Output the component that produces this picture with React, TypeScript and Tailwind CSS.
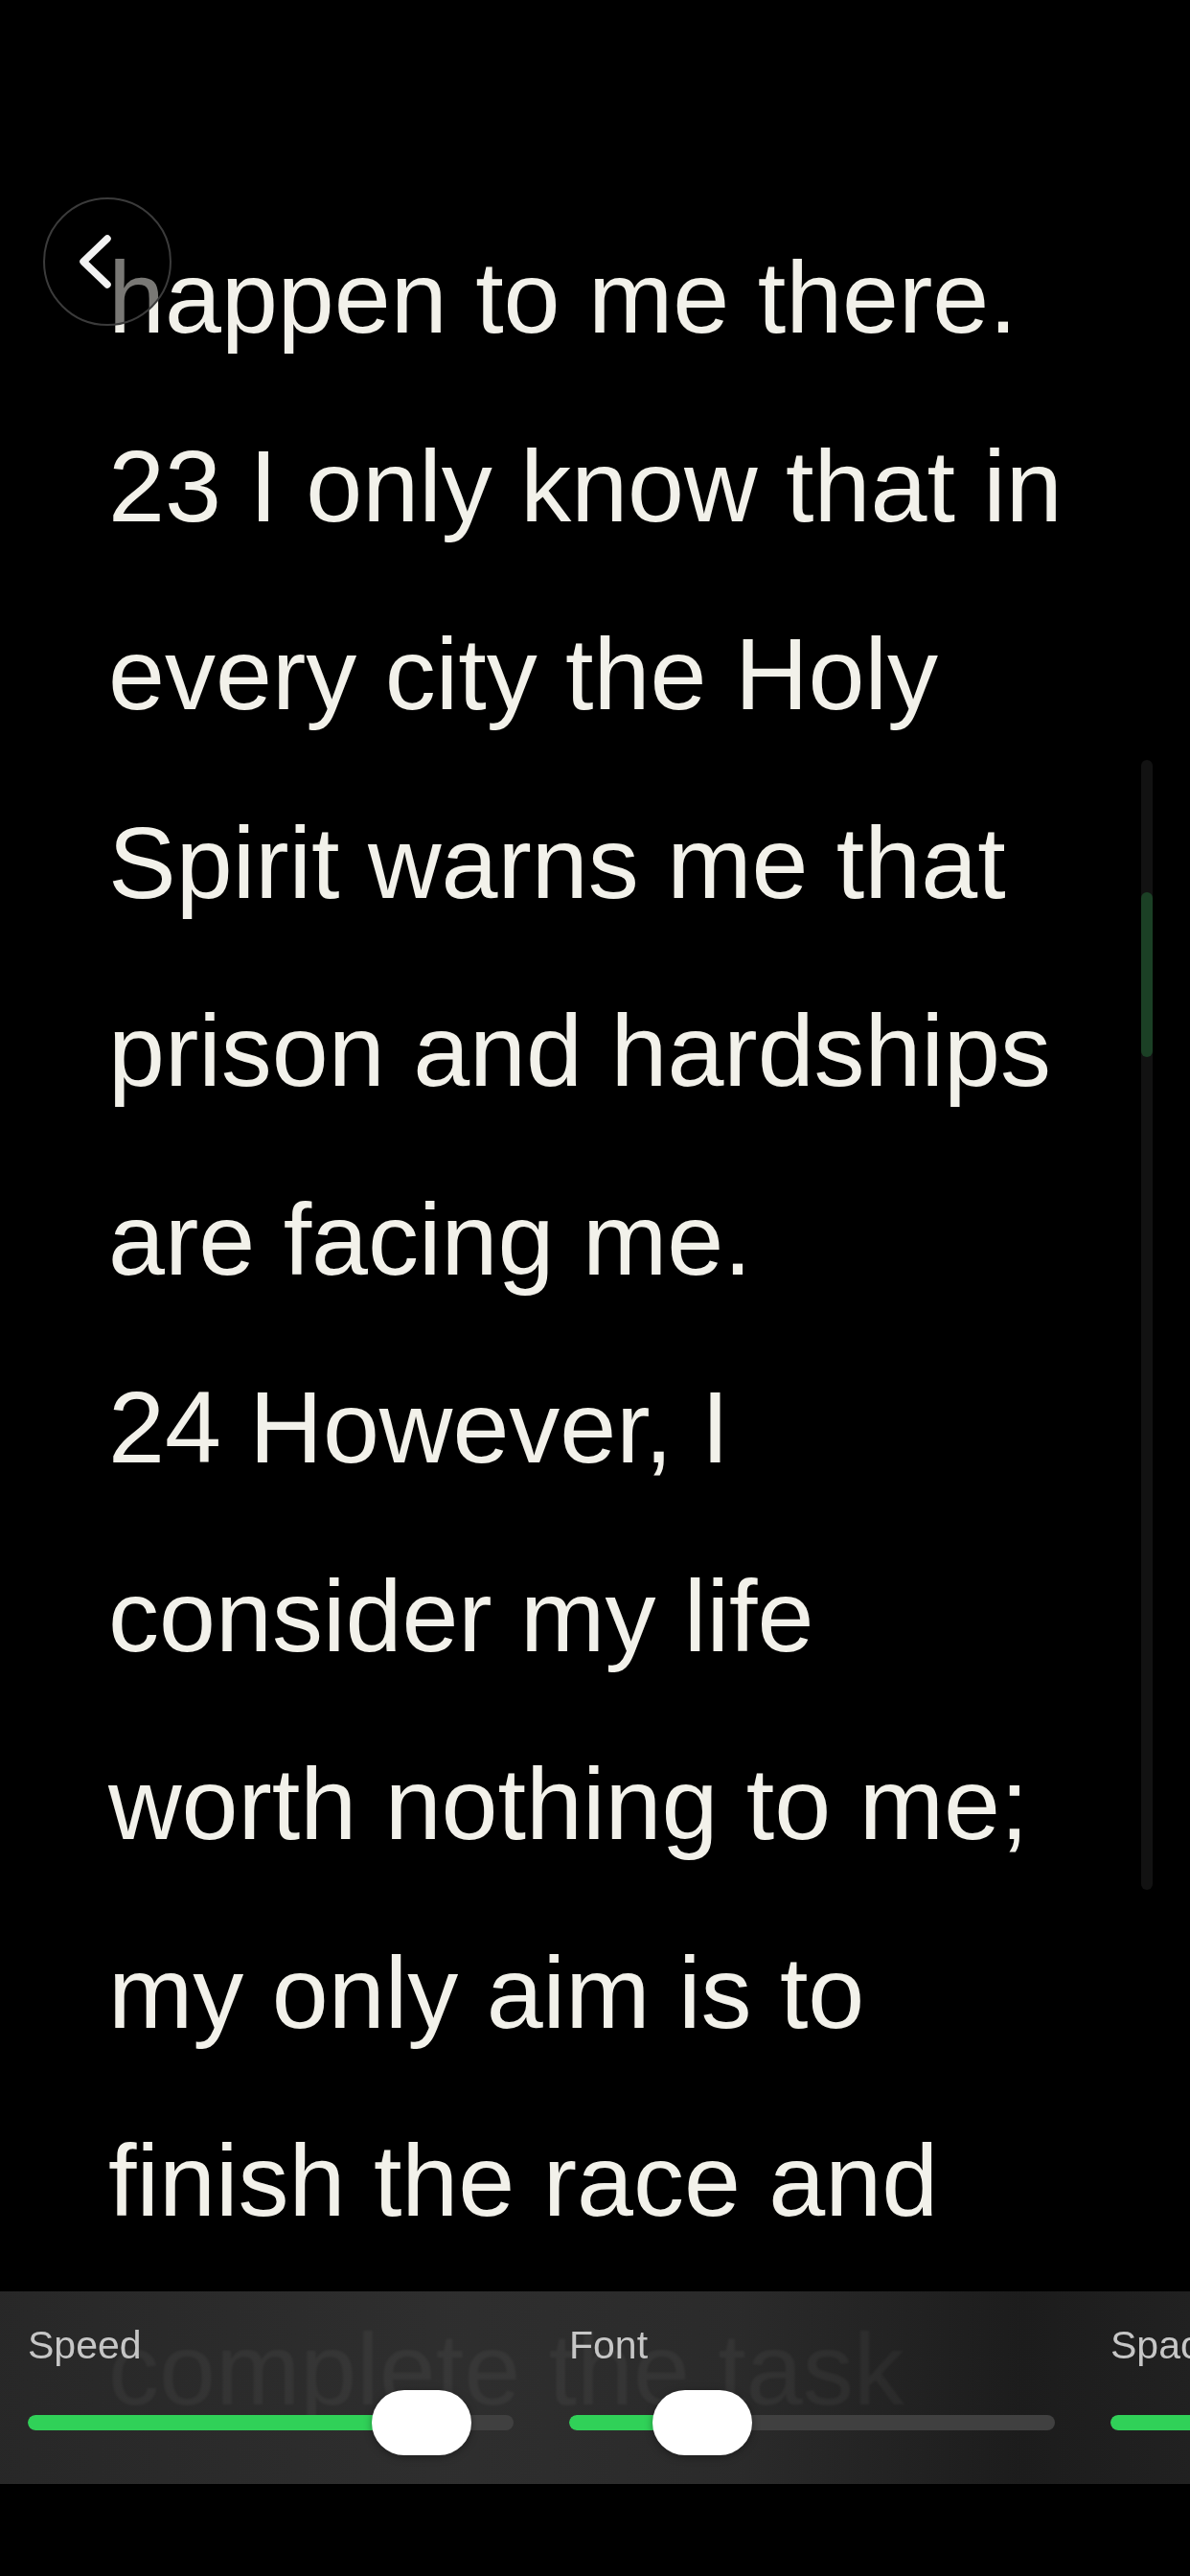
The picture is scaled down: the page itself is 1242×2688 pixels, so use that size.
import React from 'react';

const lines = [
  'happen to me there.',
  '23 I only know that in',
  'every city the Holy',
  'Spirit warns me that',
  'prison and hardships',
  'are facing me.',
  '24 However, I',
  'consider my life',
  'worth nothing to me;',
  'my only aim is to',
  'finish the race and',
  'complete the task',
];

type SliderProps = { label: string; value: number };

function Slider({ label, value }: SliderProps) {
  // thumb travels inside the track: left edge 0 .. width-104
  const thumbLeft = Math.round(value * (507 - 104));
  return (
    <div className="w-[507px] shrink-0 flex flex-col">
      <div className="h-[48px] leading-[48px] text-[41px] text-[#c6c6c6]">{label}</div>
      <div className="relative mt-[23px] h-[68px] flex items-center">
        <div className="relative h-[16px] w-full rounded-full bg-[#404040] overflow-hidden">
          <div className="h-full rounded-full bg-[#30d158]" style={{ width: thumbLeft + 52 }} />
        </div>
        <div
          className="absolute top-0 h-[68px] w-[104px] rounded-[34px] bg-white shadow-[0_2px_8px_rgba(0,0,0,0.35)]"
          style={{ left: thumbLeft }}
        />
      </div>
    </div>
  );
}

export default function App() {
  return (
    <div
      className="relative w-[1242px] h-[2688px] bg-black overflow-hidden"
      style={{ fontFamily: '"Liberation Sans", Arial, sans-serif' }}
    >
      {/* script text, clipped at the bottom of the controls */}
      <div className="h-[2592px] overflow-hidden pt-[212px] pl-[113px] text-[106px] leading-[196.5px] text-[#f2f1ea]">
        {lines.map((l, i) => (
          <div key={i} className="whitespace-nowrap">{l}</div>
        ))}
      </div>

      {/* back button */}
      <button className="absolute left-[45px] top-[206px] w-[134px] h-[134px] rounded-full border-2 border-[#3b3b3b] bg-black/50 flex items-center justify-center">
        <svg width="60" height="60" viewBox="0 0 60 60" fill="none" className="-ml-[16px]">
          <path d="M38 6 L13 30 L38 54" stroke="#f2f2f2" strokeWidth="7.5" strokeLinecap="round" strokeLinejoin="round" />
        </svg>
      </button>

      {/* scroll indicator */}
      <div className="absolute left-[1191px] top-[793px] w-[12px] h-[1179px] rounded-full bg-[#121212]">
        <div className="mt-[138px] h-[172px] w-full rounded-full bg-[#1b4025]" />
      </div>

      {/* controls */}
      <div className="absolute left-0 top-[2391px] w-full h-[201px] overflow-hidden backdrop-blur-[1px] bg-[linear-gradient(90deg,rgba(41,41,41,0.965)_0%,rgba(48,48,48,0.965)_38%,rgba(44,44,44,0.965)_62%,rgba(29,29,29,0.97)_86%,rgba(34,34,34,0.97)_100%)]">
        <div className="flex gap-[58px] pl-[29px] pt-[32px]">
          <Slider label="Speed" value={0.89} />
          <Slider label="Font" value={0.216} />
          <Slider label="Spacing" value={0.6} />
        </div>
      </div>
    </div>
  );
}
